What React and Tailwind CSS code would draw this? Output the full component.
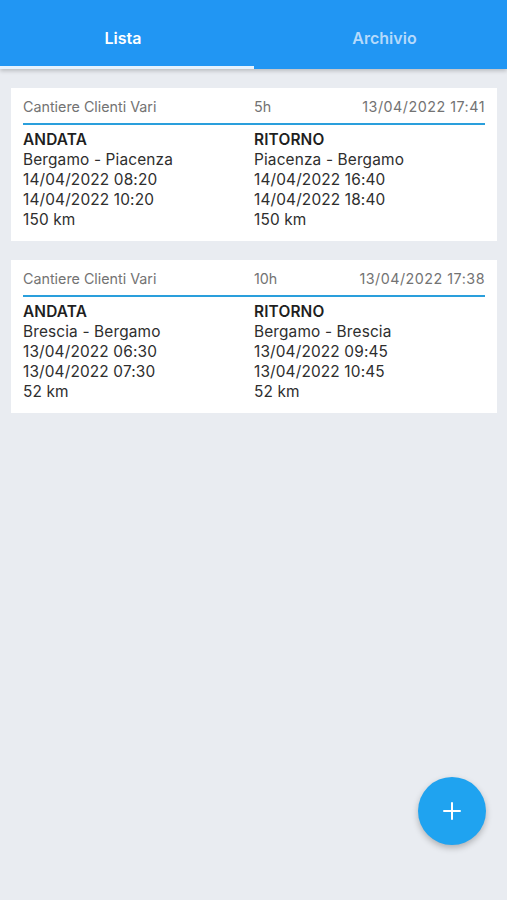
import React from "react";

const trips = [
  {
    title: "Cantiere Clienti Vari",
    hours: "5h",
    date: "13/04/2022 17:41",
    andata: ["Bergamo - Piacenza", "14/04/2022 08:20", "14/04/2022 10:20", "150 km"],
    ritorno: ["Piacenza - Bergamo", "14/04/2022 16:40", "14/04/2022 18:40", "150 km"],
  },
  {
    title: "Cantiere Clienti Vari",
    hours: "10h",
    date: "13/04/2022 17:38",
    andata: ["Brescia - Bergamo", "13/04/2022 06:30", "13/04/2022 07:30", "52 km"],
    ritorno: ["Bergamo - Brescia", "13/04/2022 09:45", "13/04/2022 10:45", "52 km"],
  },
];

function Col({ label, lines }) {
  return (
    <div className="flex flex-col text-[15.4px] leading-[20px] tracking-[0.15px] text-[#2e2e2e]">
      <div className="font-semibold text-[#1f1f1f]">{label}</div>
      {lines.map((l, i) => (
        <div key={i}>{l}</div>
      ))}
    </div>
  );
}

function Card({ t }) {
  return (
    <div className="bg-white px-3 pt-[9px] pb-[11px]">
      <div className="grid grid-cols-2 text-[14.3px] leading-[20px] text-[#737373]">
        <div>{t.title}</div>
        <div className="flex justify-between">
          <span>{t.hours}</span>
          <span className="tracking-[0.5px]">{t.date}</span>
        </div>
      </div>
      <div className="mt-[6px] h-[2px] bg-[#2a9fdc]" />
      <div className="mt-[5px] grid grid-cols-2">
        <Col label="ANDATA" lines={t.andata} />
        <Col label="RITORNO" lines={t.ritorno} />
      </div>
    </div>
  );
}

export default function App() {
  return (
    <div
      className="relative w-[507px] h-[900px] bg-[#e9ecf1] overflow-hidden"
      style={{ fontFamily: 'Inter, "Liberation Sans", Arial, sans-serif' }}
    >
      <div className="relative z-10 h-[69px] bg-[#2196f3] flex flex-col shadow-[0_2px_4px_rgba(0,0,0,0.2)]">
        <div className="flex flex-1">
          <div className="w-[254px] flex items-center justify-center pt-[10px] pr-[8px] text-[16px] font-semibold text-white">
            Lista
          </div>
          <div className="flex-1 flex items-center justify-center pt-[10px] pl-[8px] text-[16px] font-semibold text-[#b5dafb]">
            Archivio
          </div>
        </div>
        <div className="h-[3px] w-[254px] bg-[#e6f2fd]" />
      </div>
      <div className="px-[11px] pt-[19px] flex flex-col gap-[19px] w-[508px]">
        {trips.map((t, i) => (
          <Card key={i} t={t} />
        ))}
      </div>
      <button className="absolute left-[418px] top-[777px] w-[68px] h-[68px] rounded-full bg-[#1fa3f0] flex items-center justify-center shadow-[0_3px_6px_rgba(0,0,0,0.25)]">
        <svg width="20" height="20" viewBox="0 0 20 20" fill="none" stroke="white" strokeWidth="2" strokeLinecap="round">
          <path d="M10 2v16M2 10h16" />
        </svg>
      </button>
    </div>
  );
}
